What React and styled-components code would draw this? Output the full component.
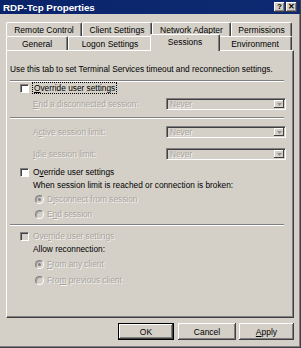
import React from 'react';
import styled, { createGlobalStyle, css } from 'styled-components';

const GlobalStyle = createGlobalStyle`
  * { box-sizing: border-box; }
  body {
    margin: 0;
    background: #d4d0c8;
    font-family: "Liberation Sans", Arial, sans-serif;
  }
`;

const face = '#d4d0c8';
const shadow = '#808080';
const dark = '#404040';
const dimText = '#a9a59d';

const Window = styled.div`
  width: 301px;
  height: 348px;
  display: flex;
  flex-direction: column;
  background: ${face};
  border-right: 1px solid ${dark};
  border-bottom: 1px solid ${dark};
  box-shadow: inset -1px -1px ${shadow};
`;

const TitleBar = styled.div`
  height: 14px;
  flex: none;
  display: flex;
  align-items: center;
  justify-content: space-between;
  padding: 0 3px 0 3px;
  background: linear-gradient(90deg, #0a246a, #0d2a72);
`;

const Title = styled.span`
  color: #fff;
  font-weight: bold;
  font-size: 9.8px;
`;

const TitleButtons = styled.div`
  display: flex;
  gap: 1px;
`;

const CaptionButton = styled.div`
  width: 11px;
  height: 10px;
  display: flex;
  align-items: center;
  justify-content: center;
  background: ${face};
  box-shadow: inset -1px -1px ${dark}, inset 1px 1px #fff, inset -2px -2px ${shadow};
  color: #000;
  font-weight: bold;
  font-size: 8px;
  line-height: 1;
`;

const Body = styled.div`
  flex: 1;
  display: flex;
  flex-direction: column;
  padding: 8px 6px 0 6px;
`;

const TabStrip = styled.div`
  display: flex;
  flex-direction: column;
`;

const TabRow = styled.div`
  display: flex;
  height: 14px;
  align-items: flex-start;
`;

const Tab = styled.div`
  width: ${p => p.$w + (p.$active ? 4 : 0)}px;
  height: 14px;
  flex: none;
  display: flex;
  align-items: center;
  justify-content: center;
  font-size: 8.5px;
  color: #000;
  background: ${face};
  border-top: 1px solid #fff;
  border-left: 1px solid #fff;
  border-right: 1px solid ${dark};
  box-shadow: inset -1px 0 ${shadow};
  border-top-left-radius: 2px;
  border-top-right-radius: 2px;
  ${p => p.$active && css`
    height: 17px;
    margin: -2px -2px -1px;
    padding-bottom: 3px;
    position: relative;
    z-index: 1;
  `}
`;

const Panel = styled.div`
  height: 268px;
  display: flex;
  flex-direction: column;
  padding: 0 0 0 3px;
  border-top: 1px solid #fff;
  border-left: 1px solid #fff;
  border-right: 1px solid ${dark};
  border-bottom: 1px solid ${dark};
  box-shadow: inset -1px -1px ${shadow};
  font-size: 8.3px;
`;

const Line = styled.div`
  height: 10px;
  display: flex;
  align-items: center;
  margin-top: ${p => p.$top}px;
  padding-left: ${p => p.$indent || 0}px;
  white-space: nowrap;
  color: ${p => (p.$dim ? dimText : '#000')};
  text-shadow: ${p => (p.$dim ? '1px 1px 0 rgba(255,255,255,0.75)' : 'none')};
`;

const Separator = styled.div`
  height: 2px;
  margin: ${p => p.$top}px 9px 0 0;
  border-top: 1px solid ${shadow};
  border-bottom: 1px solid #fff;
`;

const CheckRow = styled(Line)`
  padding-left: 10px;
  gap: 4px;
`;

const Box = styled.span`
  width: 9px;
  height: 9px;
  flex: none;
  background: ${p => (p.$disabled ? face : '#fff')};
  border-top: 1px solid ${shadow};
  border-left: 1px solid ${shadow};
  border-right: 1px solid #fff;
  border-bottom: 1px solid #fff;
  box-shadow: inset 1px 1px ${dark};
`;

const Focus = styled.span`
  outline: 1px dotted #000;
  outline-offset: 0;
  padding: 0 1px;
  line-height: 10px;
`;

const RadioRow = styled(Line)`
  padding-left: 25px;
  gap: 3px;
`;

const Radio = styled.span`
  width: 9px;
  height: 9px;
  flex: none;
  border-radius: 50%;
  display: flex;
  align-items: center;
  justify-content: center;
  background: ${face};
  border: 1px solid;
  border-color: ${shadow} #fff #fff ${shadow};
  box-shadow: inset 1px 1px #a0a0a0;
  &::after {
    content: '';
    width: 3px;
    height: 3px;
    border-radius: 50%;
    background: ${p => (p.$checked ? shadow : 'transparent')};
  }
`;

const SettingRow = styled.div`
  display: grid;
  grid-template-columns: 133px 120px;
  align-items: center;
  height: 12px;
  margin-top: ${p => p.$top}px;
  padding-left: 23px;
  color: ${dimText};
  text-shadow: 1px 1px 0 rgba(255,255,255,0.75);
  white-space: nowrap;
`;

const Select = styled.div`
  height: 12px;
  display: flex;
  align-items: center;
  justify-content: space-between;
  padding: 0 1px 0 3px;
  border: 1px solid;
  border-color: ${shadow} #fff #fff ${shadow};
  box-shadow: inset 1px 1px ${dark};
  color: ${dimText};
`;

const DropButton = styled.span`
  width: 10px;
  height: 8px;
  display: flex;
  align-items: center;
  justify-content: center;
  background: ${face};
  box-shadow: inset -1px -1px ${dark}, inset 1px 1px #fff;
`;

const ButtonBar = styled.div`
  display: flex;
  justify-content: flex-end;
  margin-top: 5px;
`;

const Button = styled.button`
  width: ${p => p.$w}px;
  height: 17px;
  margin-left: ${p => p.$gap}px;
  padding: 0;
  font-family: "Liberation Sans", Arial, sans-serif;
  font-size: 8.5px;
  color: #000;
  background: ${face};
  border: none;
  box-shadow: inset -1px -1px ${dark}, inset 1px 1px #fff, inset -2px -2px ${shadow};
  ${p => p.$default && css`
    border: 1px solid #000;
  `}
`;

const Arrow = () => (
  <svg width="5" height="3" viewBox="0 0 5 3">
    <path d="M0 0h5L2.5 3z" fill="#909090" />
  </svg>
);

const Dropdown = () => (
  <Select>
    <span>Never</span>
    <DropButton><Arrow /></DropButton>
  </Select>
);

const backTabs = [
  { label: 'Remote Control', w: 76 },
  { label: 'Client Settings', w: 70 },
  { label: 'Network Adapter', w: 79 },
  { label: 'Permissions', w: 61 },
];

const frontTabs = [
  { label: 'General', w: 62 },
  { label: 'Logon Settings', w: 84 },
  { label: 'Sessions', w: 66, active: true },
  { label: 'Environment', w: 74 },
];

export default function App() {
  return (
    <>
      <GlobalStyle />
      <Window>
        <TitleBar>
          <Title>RDP-Tcp Properties</Title>
          <TitleButtons>
            <CaptionButton>?</CaptionButton>
            <CaptionButton>✕</CaptionButton>
          </TitleButtons>
        </TitleBar>
        <Body>
          <TabStrip>
            <TabRow>
              {backTabs.map(t => <Tab key={t.label} $w={t.w}>{t.label}</Tab>)}
            </TabRow>
            <TabRow>
              {frontTabs.map(t => <Tab key={t.label} $w={t.w} $active={t.active}>{t.label}</Tab>)}
            </TabRow>
          </TabStrip>
          <Panel>
            <Line $top={13}>Use this tab to set Terminal Services timeout and reconnection settings.</Line>
            <Separator $top={6} />
            <CheckRow $top={1}>
              <Box />
              <Focus><u>O</u>verride user settings</Focus>
            </CheckRow>
            <SettingRow $top={5}>
              <span><u>E</u>nd a disconnected session:</span>
              <Dropdown />
            </SettingRow>
            <Separator $top={7} />
            <SettingRow $top={7}>
              <span>A<u>c</u>tive session limit:</span>
              <Dropdown />
            </SettingRow>
            <SettingRow $top={10}>
              <span><u>I</u>dle session limit:</span>
              <Dropdown />
            </SettingRow>
            <CheckRow $top={7}>
              <Box />
              <span>O<u>v</u>erride user settings</span>
            </CheckRow>
            <Line $top={3} $indent={23}>When session limit is reached or connection is broken:</Line>
            <RadioRow $top={4} $dim>
              <Radio $checked />
              <span>D<u>i</u>sconnect from session</span>
            </RadioRow>
            <RadioRow $top={5} $dim>
              <Radio />
              <span>E<u>n</u>d session</span>
            </RadioRow>
            <Separator $top={5} />
            <CheckRow $top={5} $dim>
              <Box $disabled />
              <span>Ove<u>r</u>ride user settings</span>
            </CheckRow>
            <Line $top={3} $indent={23}>Allow reconnection:</Line>
            <RadioRow $top={5} $dim>
              <Radio $checked />
              <span><u>F</u>rom any client</span>
            </RadioRow>
            <RadioRow $top={6} $dim>
              <Radio />
              <span>Fro<u>m</u> previous client</span>
            </RadioRow>
          </Panel>
          <ButtonBar>
            <Button $w={56} $gap={0} $default>OK</Button>
            <Button $w={58} $gap={4}>Cancel</Button>
            <Button $w={55} $gap={3}><u>A</u>pply</Button>
          </ButtonBar>
        </Body>
      </Window>
    </>
  );
}
